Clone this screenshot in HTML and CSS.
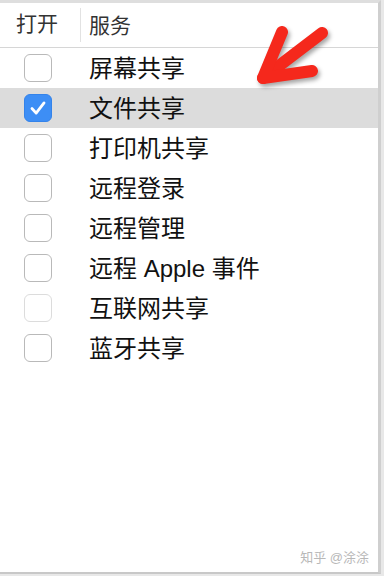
FILE: index.html
```html
<!DOCTYPE html>
<html lang="zh-CN">
<head>
    <meta charset="UTF-8">
    <meta name="viewport" content="width=device-width, initial-scale=1.0">
    <title>共享服务</title>
    <link rel="stylesheet" href="styles.css">
</head>
<body>
    <div class="panel">
        <div class="header">
            <div class="col-on">打开</div>
            <div class="col-name">服务</div>
        </div>
        <div class="list">
            <div class="row"><span class="box"></span><span class="label">屏幕共享</span></div>
            <div class="row selected"><span class="box checked">
                <svg viewBox="0 0 28 28" width="28" height="28"><path d="M7.5 14.5 L12 19.5 L20.5 8.5" fill="none" stroke="#fff" stroke-width="3" stroke-linecap="round" stroke-linejoin="round"/></svg>
            </span><span class="label">文件共享</span></div>
            <div class="row"><span class="box"></span><span class="label">打印机共享</span></div>
            <div class="row"><span class="box"></span><span class="label">远程登录</span></div>
            <div class="row"><span class="box"></span><span class="label">远程管理</span></div>
            <div class="row"><span class="box"></span><span class="label">远程 Apple 事件</span></div>
            <div class="row"><span class="box disabled"></span><span class="label">互联网共享</span></div>
            <div class="row"><span class="box"></span><span class="label">蓝牙共享</span></div>
        </div>
        <svg class="arrow" viewBox="0 0 90 72" width="90" height="72">
            <g fill="none" stroke="#f5281c" stroke-width="12" stroke-linecap="round" stroke-linejoin="round">
                <path d="M72 13 L13 58"/>
                <path d="M32 12 L13 58 L62 51"/>
            </g>
        </svg>
        <div class="watermark">知乎 @涂涂</div>
    </div>
</body>
</html>
```
FILE: styles.css
```css
body {
    margin: 0;
    font-family: "Liberation Sans", "Noto Sans CJK SC", sans-serif;
    background: #e8e8e8;
}
.panel {
    position: relative;
    width: 378px;
    height: 569px;
    background: white;
    border-top: 3px solid #dedede;
    border-right: 3px solid #cfcfcf;
    border-bottom: 2px solid #c8c8c8;
    box-sizing: content-box;
}
.header {
    display: flex;
    align-items: center;
    height: 44px;
    border-bottom: 1px solid #d6d6d6;
    font-size: 21px;
    color: #333;
}
.col-on {
    width: 64px;
    padding-left: 16px;
    height: 34px;
    line-height: 32px;
    border-right: 1px solid #e2e2e2;
}
.col-name {
    padding-left: 8px;
    padding-bottom: 2px;
}
.row {
    display: flex;
    align-items: center;
    height: 40px;
    font-size: 24px;
    color: #111;
}
.label {
    padding-bottom: 3px;
}
.row.selected {
    background: #dcdcdc;
}
.box {
    width: 26px;
    height: 26px;
    margin-left: 24px;
    margin-right: 37px;
    border: 1px solid #b9b9b9;
    border-radius: 6px;
    background: white;
    display: flex;
    align-items: center;
    justify-content: center;
}
.box.checked {
    background: #3d8ef5;
    border-color: #3483ea;
}
.box.disabled {
    border-color: #dcdcdc;
}
.arrow {
    position: absolute;
    left: 250px;
    top: 17px;
    filter: drop-shadow(2px 3px 2px rgba(0, 0, 0, 0.35));
}
.watermark {
    position: absolute;
    right: 9px;
    bottom: 6px;
    font-size: 13px;
    color: #b8b8b8;
}
```
